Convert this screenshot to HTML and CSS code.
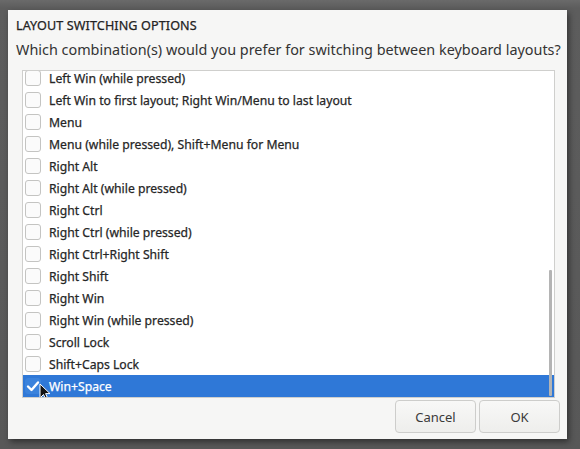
FILE: index.html
```html
<!DOCTYPE html>
<html>
<head>
<meta charset="utf-8">
<link rel="stylesheet" href="styles.css">
</head>
<body>
<div class="screen">
  <div class="dialog">
    <div class="title">LAYOUT SWITCHING OPTIONS</div>
    <div class="question">Which combination(s) would you prefer for switching between keyboard layouts?</div>
    <div class="list">
      <div class="rows">
        <div class="row"><span class="box"></span><span class="label">Left Win (while pressed)</span></div>
        <div class="row"><span class="box"></span><span class="label">Left Win to first layout; Right Win/Menu to last layout</span></div>
        <div class="row"><span class="box"></span><span class="label">Menu</span></div>
        <div class="row"><span class="box"></span><span class="label">Menu (while pressed), Shift+Menu for Menu</span></div>
        <div class="row"><span class="box"></span><span class="label">Right Alt</span></div>
        <div class="row"><span class="box"></span><span class="label">Right Alt (while pressed)</span></div>
        <div class="row"><span class="box"></span><span class="label">Right Ctrl</span></div>
        <div class="row"><span class="box"></span><span class="label">Right Ctrl (while pressed)</span></div>
        <div class="row"><span class="box"></span><span class="label">Right Ctrl+Right Shift</span></div>
        <div class="row"><span class="box"></span><span class="label">Right Shift</span></div>
        <div class="row"><span class="box"></span><span class="label">Right Win</span></div>
        <div class="row"><span class="box"></span><span class="label">Right Win (while pressed)</span></div>
        <div class="row"><span class="box"></span><span class="label">Scroll Lock</span></div>
        <div class="row"><span class="box"></span><span class="label">Shift+Caps Lock</span></div>
        <div class="row selected"><span class="box checked"><svg width="16" height="16" viewBox="0 0 16 16"><path d="M3 8.5 L6.5 12 L13 4.5" fill="none" stroke="#fff" stroke-width="2.4" stroke-linecap="round" stroke-linejoin="round"/></svg></span><span class="label">Win+Space</span></div>
      </div>
      <div class="scrollbar"></div>
      <svg class="cursor" width="12" height="19" viewBox="0 0 12 19"><path d="M1 1 L1 15 L4.5 11.5 L7 17 L9 16 L6.6 10.6 L11 10.6 Z" fill="#111" stroke="#fff" stroke-width="1"/></svg>
    </div>
    <div class="buttons">
      <div class="btn">Cancel</div>
      <div class="btn">OK</div>
    </div>
  </div>
</div>
</body>
</html>
```

FILE: styles.css
```css
html, body {
  margin: 0;
  padding: 0;
}
body {
  width: 580px;
  height: 449px;
  overflow: hidden;
  background: #595959;
  font-family: "Noto Sans", "Open Sans", sans-serif;
}
.screen {
  width: 580px;
  height: 449px;
  padding: 10px 0 0 8px;
  box-sizing: border-box;
  background: linear-gradient(#6a6a6a 0, #5d5d5d 8px, #585858 100%);
}
.dialog {
  width: 559px;
  height: 429px;
  box-sizing: border-box;
  padding: 7px 7px 0 8px;
  background: #f6f6f5;
  box-shadow: 2px 3px 6px rgba(0,0,0,0.45);
  display: flex;
  flex-direction: column;
  color: #2e2e2e;
}
.title {
  font-size: 12.6px;
  line-height: 18px;
  height: 18px;
  letter-spacing: 0.1px;
  color: #222;
  -webkit-text-stroke: 0.25px #222;
}
.question {
  margin-top: 5px;
  font-size: 14.4px;
  line-height: 20px;
  height: 20px;
  white-space: nowrap;
  color: #333;
}
.list {
  position: relative;
  margin: 10px 5px 0 6px;
  height: 328px;
  box-sizing: border-box;
  border: 1px solid #cfcfcd;
  background: #fff;
  overflow: hidden;
}
.rows {
  margin-top: -4px;
}
.row {
  height: 22px;
  display: flex;
  align-items: center;
  padding-left: 2px;
  font-size: 12.2px;
  color: #262626;
}
.box {
  width: 14px;
  height: 14px;
  border: 1px solid #c4c4c2;
  border-radius: 3px;
  background: #fbfbfb;
  flex: none;
  margin-right: 8px;
  display: flex;
  align-items: center;
  justify-content: center;
}
.label {
  white-space: nowrap;
  -webkit-text-stroke: 0.25px #262626;
}
.row.selected {
  background: #2f78d7;
  color: #fff;
}
.row.selected .label {
  -webkit-text-stroke: 0.25px #fff;
}
.box.checked {
  background: #3a82dc;
  border-color: #3a82dc;
}
.box.checked svg {
  width: 16px;
  height: 16px;
  flex: none;
}
.scrollbar {
  position: absolute;
  right: 2px;
  top: 199px;
  width: 3px;
  height: 126px;
  background: #b4b4b4;
  border-radius: 1px;
}
.cursor {
  position: absolute;
  left: 16px;
  top: 312px;
}
.buttons {
  margin-top: 2px;
  display: flex;
  justify-content: flex-end;
  gap: 3px;
}
.btn {
  width: 81px;
  height: 33px;
  box-sizing: border-box;
  border: 1px solid #cdcdcb;
  border-radius: 4px;
  background: linear-gradient(#f8f8f7, #eeeeec);
  display: flex;
  align-items: center;
  justify-content: center;
  font-size: 13px;
  color: #3a3a3a;
}
```
